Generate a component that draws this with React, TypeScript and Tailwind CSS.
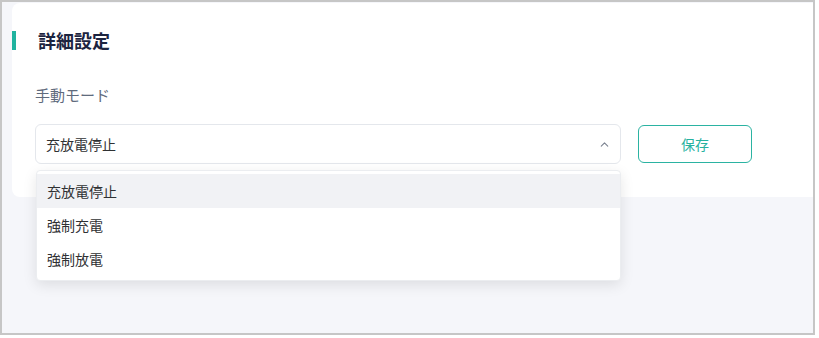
import { ChevronUp } from "lucide-react";

const modes = ["充放電停止", "強制充電", "強制放電"];

export default function App() {
  const selected = modes[0];

  return (
    <div className="h-[338px] w-[819px] bg-white font-['Noto_Sans_CJK_JP',sans-serif]">
      <div className="h-[335px] w-[815px] border-2 border-[#c6c6c6] bg-[#f5f6fa] pl-[10px] pt-px">
        <div className="h-[194px] rounded-l-lg bg-white">
          {/* header */}
          <div className="flex h-[47px] items-end">
            <div className="flex h-[19px] items-center">
              <span className="h-[19px] w-[4px] bg-[#20b39f]" />
              <h2 className="ml-[22px] text-[18px] font-bold leading-[19px] text-[#1c2440]">
                詳細設定
              </h2>
            </div>
          </div>

          <div className="pl-[23px]">
            <div className="mt-[34px] h-[22px] text-[15px] leading-[22px] text-[#5f6b7d]">
              手動モード
            </div>

            <div className="mt-[18px] flex items-center">
              <div className="relative">
                <div className="flex h-[40px] w-[586px] items-center justify-between rounded-md border border-[#e4e7ec] bg-white pl-[10px] pr-[9px]">
                  <span className="text-[14px] text-[#2f3133]">{selected}</span>
                  <ChevronUp size={13} strokeWidth={2} className="text-[#7b8290]" />
                </div>

                <div className="absolute left-px top-[46px] z-10 w-[585px] rounded border border-[#ebedf0] bg-white pb-[4px] pt-[3px] shadow-[0_4px_14px_rgba(0,0,0,0.10)]">
                  {modes.map((mode) => (
                    <div
                      key={mode}
                      className={`flex h-[34px] items-center pl-[10px] text-[14px] text-[#2f3133] ${
                        mode === selected ? "bg-[#f1f2f5]" : ""
                      }`}
                    >
                      {mode}
                    </div>
                  ))}
                </div>
              </div>

              <button
                type="button"
                className="ml-[17px] h-[38px] w-[114px] rounded-md border border-[#2bb3a2] bg-white text-[14px] text-[#27b19f]"
              >
                保存
              </button>
            </div>
          </div>
        </div>
      </div>
    </div>
  );
}
